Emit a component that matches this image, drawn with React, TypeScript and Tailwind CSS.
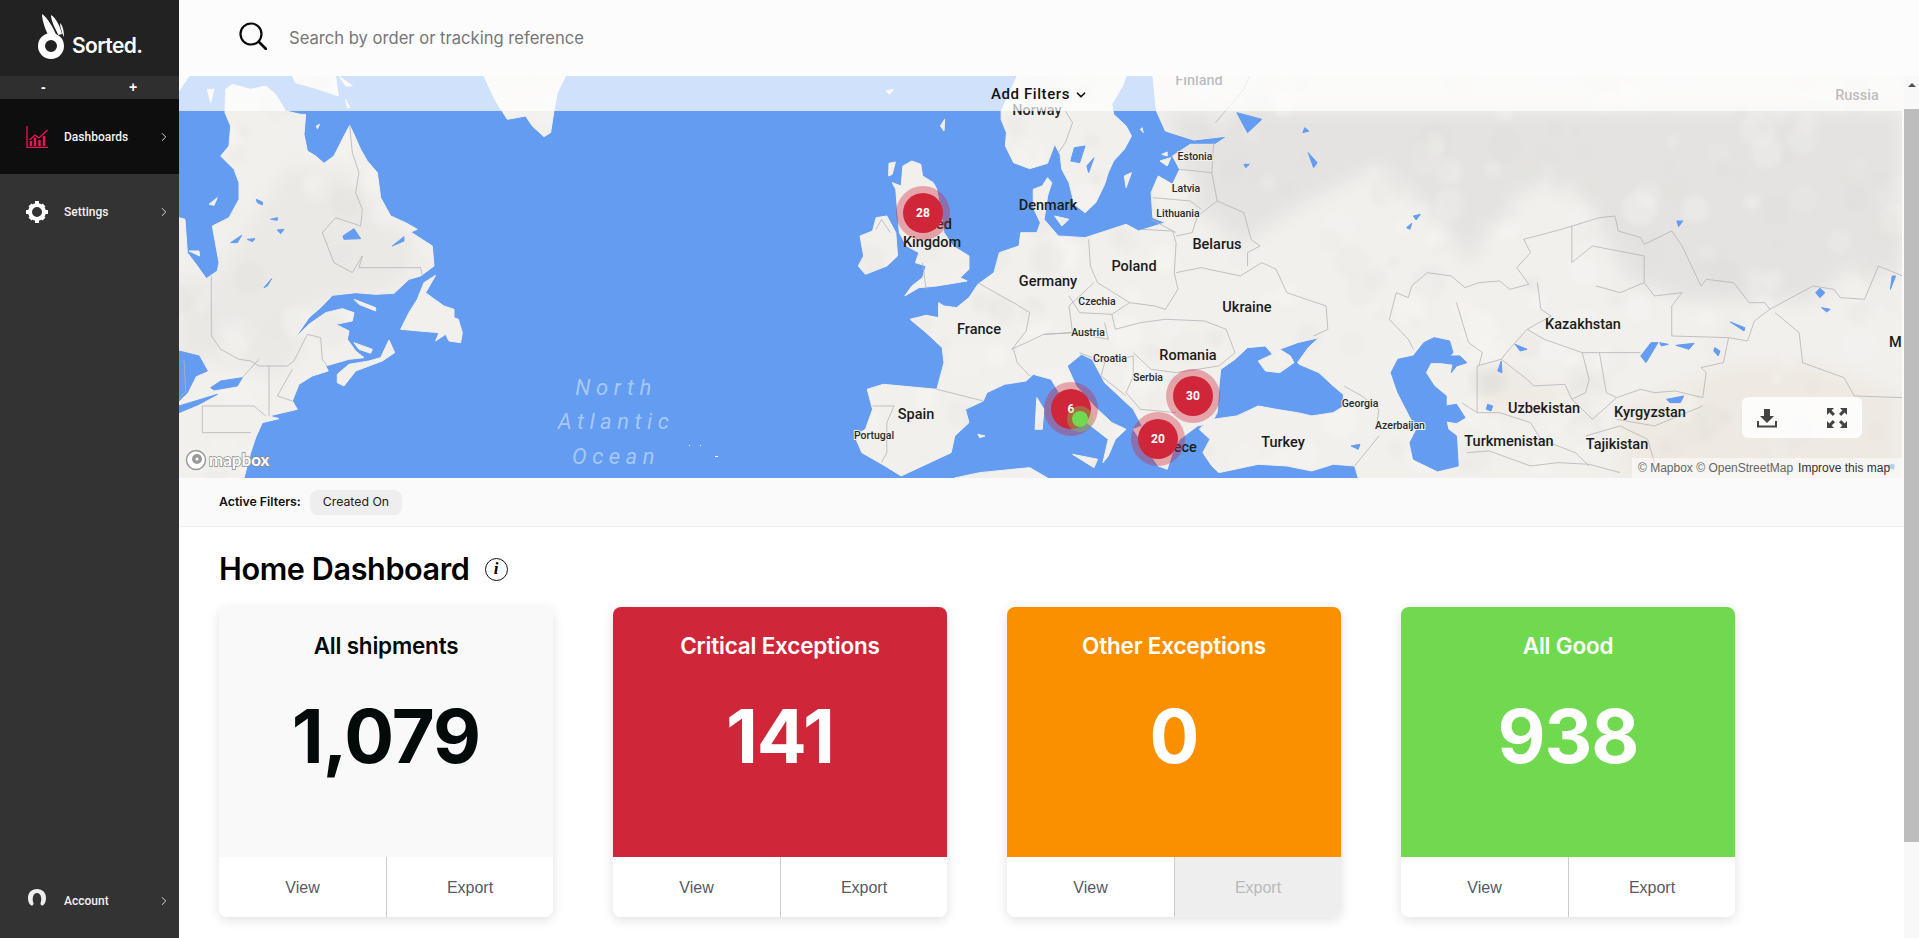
import type { ReactNode } from "react";
import { ChevronRight, ChevronDown } from "lucide-react";

const LAND = "#f2f0ed";
const WATER = "#639cf0";
const BORDER = "#b4b4b8";

// coastlines traced per map section, each section has its own scale
const WEST = "scale(0.3333 0.3333)";
const MID = "translate(640 0) scale(0.3571 0.3333)";
const EAST = "translate(1200 0) scale(0.3444 0.3333)";

const westLand = [
  "140,40 160,25 215,40 260,30 290,55 320,105 365,115 380,115 375,175 385,225 410,240 435,262 465,240 490,190 512,148 525,175 545,220 565,255 595,290 605,365 635,420 680,440 715,460 695,468 760,510 765,570 725,600 690,610 645,652 590,655 530,650 460,658 430,690 390,725 345,790 390,745 440,710 490,698 525,710 520,735 470,745 510,765 505,790 530,825 555,845 510,850 440,870 448,885 400,900 360,925 340,975 355,1000 270,1020 300,1028 250,1040 230,1085 215,1130 195,1206 0,1206 0,425 18,430 25,530 55,570 82,608 115,585 120,560 100,450 150,425 180,370 180,320 165,280 125,240 150,210 155,150 138,110",
  "475,895 510,865 570,855 605,845 630,792 647,830 610,855 530,885 495,930 475,920",
  "665,760 690,710 715,670 735,620 770,598 740,650 760,665 795,690 825,700 825,725 838,730 850,770 845,800 810,795 800,775 770,795 780,770 720,765",
  "525,670 590,695 590,705 540,685",
  "525,800 580,820 575,832 540,820",
  "915,0 1160,0 1135,50 1125,105 1115,170 1095,182 1060,150 1040,120 985,130 950,75",
  "340,0 470,0 478,60 420,40 350,20",
  "0,0 30,0 0,45",
  "85,40 105,40 95,80",
  "480,0 520,30 500,30",
  "500,70 512,95 505,95",
  "90,385 115,365 105,388",
  "30,525 60,525 62,540",
  "412,150 422,145 415,158",
];
const westLakes = [
  "0,825 60,840 85,885 50,900 25,950 0,975",
  "95,935 125,915 190,905 175,930 105,942",
  "0,990 115,955 60,985 0,1010",
  "232,370 250,378 250,387 235,380",
  "275,430 295,425 295,433",
  "155,500 188,478 175,500",
  "205,490 228,488 220,497",
  "295,462 315,460 305,473",
  "492,480 525,458 545,488 495,490",
  "640,510 675,482 675,495",
  "255,635 278,608 265,630",
];
const westBorders = [
  "97,600 97,780 125,820 180,850 215,855 240,870 325,870 345,855 385,775 425,785 430,850 445,870",
  "240,850 190,905",
  "512,148 520,230 540,290 530,350 550,400 545,450 470,425 430,470 465,560 520,590 550,540 540,575 725,575 730,600",
  "270,870 270,1020",
  "340,880 295,960 340,975",
  "70,990 225,990 260,1020",
  "70,990 70,1070 215,1070",
  "0,970 20,945 15,850",
];

const midLand = [
  // Europe and Asia in one piece
  "135,940 180,925 330,940 350,860 345,815 300,770 255,730 300,718 335,725 335,680 350,690 385,695 420,665 445,625 490,590 505,530 560,510 565,470 610,470 620,440 600,395 600,340 625,330 640,305 652,320 640,360 635,400 630,430 670,480 745,485 860,445 895,465 970,440 935,425 930,350 950,300 990,325 1010,280 990,240 1040,205 1110,205 1145,180 1050,192 970,165 945,105 935,0 3100,0 3100,1206 1510,1206 1500,1170 1440,1165 1380,1185 1310,1170 1230,1165 1120,1190 1100,1170 1075,1130 1095,1090 1065,1060 1090,1032 1170,1020 1230,990 1280,1000 1340,1010 1380,1020 1440,1010 1470,990 1468,955 1440,930 1400,890 1345,865 1340,860 1370,815 1400,785 1340,800 1290,820 1320,840 1330,860 1290,890 1250,885 1230,855 1270,835 1250,810 1200,815 1165,850 1125,880 1120,930 1115,1010 1100,1040 1060,1050 1010,1090 990,1130 975,1180 950,1170 905,1100 880,1060 905,1050 880,1000 860,980 800,920 765,850 735,835 695,870 720,930 770,990 820,1040 860,1060 830,1090 810,1140 795,1160 810,1090 750,1040 700,1000 650,910 600,895 580,915 520,925 470,950 460,975 410,1000 420,1040 380,1080 370,1130 290,1170 230,1200 185,1170 120,1130 100,1080 130,1060 150,1000",
  // Scandinavia
  "555,0 860,0 850,30 820,85 825,115 860,150 875,180 855,220 825,255 810,290 800,325 775,380 745,410 715,385 700,320 680,280 675,235 660,205 640,262 590,278 545,260 522,210 525,170 510,130 510,105",
  // Britain and Ireland
  "235,270 260,255 285,265 290,300 320,320 330,340 350,470 375,510 420,540 420,580 395,605 415,615 330,630 280,635 240,660 260,630 290,605 300,570 270,560 280,530 245,510 225,470 215,340 205,320 230,330",
  "160,425 190,420 215,470 220,540 190,570 130,595 110,570 125,540 115,480 150,465",
  // islands
  "196,262 214,258 205,295 195,300",
  "340,150 352,130 350,165",
  "188,45 208,40 198,55",
  "710,1135 780,1150 770,1175",
  "610,965 630,1000 625,1060 605,1060",
  "445,1075 465,1080 450,1085",
  "380,1206 450,1190 590,1175 640,1206",
  "855,300 875,290 860,335",
  "955,255 985,245 975,270",
  "960,235 975,228 975,240",
  "900,160 905,155 908,170",
  "660,420 700,430 680,450",
];
const midWater = [
  "715,215 745,210 730,260 705,255",
  "750,270 770,245 755,290",
  "1170,110 1240,130 1200,170",
  "1370,230 1395,260 1385,275",
  "1360,155 1372,165 1355,170",
  "1190,265 1205,265 1195,275",
  "1490,1110 1515,1105 1510,1120",
];
const midBorders = [
  "690,105 710,140 690,200 670,230",
  "1110,140 1190,40 1205,0",
  "1105,200 1100,290 1115,375 1060,420 1045,470 1000,480",
  "1010,280 1100,290",
  "935,365 1040,375 1070,400",
  "930,430 1000,470",
  "755,490 760,570 780,620 870,680 940,690 970,700 1005,640 995,590 1000,500 990,465 900,460",
  "1000,590 1070,575 1180,600 1240,560 1280,580 1310,650 1420,690 1425,760 1385,780",
  "1115,375 1190,410 1210,490 1235,510 1200,530 1200,570",
  "445,620 510,660 545,680 590,710 580,765 540,820 630,775 710,770 700,690 770,620",
  "700,660 730,710 820,715 870,680",
  "630,775 710,770 810,790 800,740",
  "330,940 460,975",
  "150,990 210,990 190,1040 190,1130 175,1160",
  "545,820 555,860 590,900",
  "820,715 830,760 900,740 970,730",
  "970,730 1080,735 1140,760 1165,830 1120,870 1000,890 930,880 880,830",
  "730,830 800,860 880,840 880,900 860,950 900,1000 1000,1010",
  "800,860 790,900 860,960",
  "1470,930 1520,960 1568,1000 1560,1060",
  "300,640 290,560",
  "160,460 175,430 200,470",
  "1500,1170 1568,1080",
];

const eastWater = [
  "130,800 160,785 205,795 215,830 205,840 235,840 255,860 225,870 210,890 215,865 180,860 150,860 135,890 160,930 195,960 195,990 225,985 250,1025 225,1040 195,1035 200,1060 225,1080 230,1170 170,1185 100,1150 90,1100 110,1060 80,1000 55,950 35,890 55,850 100,840",
  "345,885 355,855 357,890",
  "315,985 330,990 325,1005 312,1000",
  "395,805 430,820 410,825",
  "760,840 790,800 810,800 775,860",
  "815,800 840,805 820,810",
  "862,808 915,802 900,820",
  "1020,738 1062,755 1060,765",
  "975,815 990,825 985,840 972,825",
  "835,970 885,960 875,980 845,980",
  "100,420 120,415 108,432",
  "80,455 95,442 90,460",
  "865,435 882,435 870,452",
  "1268,650 1280,637 1295,650 1280,665",
  "1285,695 1310,700 1300,708",
  "1485,640 1490,600 1500,600",
  "1470,1170 1495,1165 1495,1180",
];
const eastBorders = [
  "30,730 50,650 85,665 95,630 140,590 210,600 250,635 290,620 350,615 380,640 435,625 400,575 440,530 420,490 530,460 640,425 685,420 695,465 760,485 770,505 850,465 880,510 935,630 950,610 1030,620 1075,680 1120,680 1135,700 1260,630 1320,640 1340,665 1410,670 1450,570 1520,600",
  "30,730 85,790 100,820",
  "285,870 355,850 430,910 450,930 540,925 560,970 620,1030 690,965 760,940 800,950 860,945 940,965 950,890 935,875 1000,860 1015,785 1070,795 1090,735 1135,700",
  "1150,710 1220,770 1230,860 1350,905 1380,960 1520,965",
  "285,870 285,1010",
  "240,980 285,1010 350,1010 440,1040 470,1090 570,1130 610,1170",
  "690,1030 800,1050 940,990",
  "600,1080 700,1050 780,1090 800,1160",
  "255,1130 320,1125 440,1170 520,1160 610,1165 700,1190",
  "225,680 260,800 300,830 290,870",
  "590,830 760,830",
  "590,830 610,910 600,950 560,970",
  "640,830 660,950 690,965",
  "430,760 480,790 590,830",
  "560,450 560,560 620,510 770,540 770,620 700,650 630,630",
  "770,620 800,660 880,650 850,690 850,780 1015,785",
  "460,620 470,700 500,720 430,760 370,830 355,850",
];
// broad terrain tones, in plain map coordinates
const terrain: [string, string][] = [
  ["985,35 1723,35 1723,200 1670,190 1640,225 1510,225 1450,205 1400,115 1350,110 1310,150 1290,190 1280,170 1230,115 1200,90 1120,130 1060,170 1020,130", "#e4e3e1"],
  ["1440,335 1545,290 1625,285 1723,320 1723,402 1440,402", "#eee9e2"],
  ["1298,290 1322,283 1350,310 1385,310 1390,335 1300,338", "#efeae3"],
  ["0,200 40,210 120,280 100,300 30,280 0,300", "#e9e8e5"],
  ["35,200 110,90 170,100 240,180 215,215 130,230 120,280 60,290", "#eae9e6"],
];

const majorLabels: [string, number, number][] = [
  ["Norway", 1037, 110],
  ["United", 931, 224],
  ["Kingdom", 932, 242],
  ["Denmark", 1048, 205],
  ["Germany", 1048, 281],
  ["Poland", 1134, 266],
  ["Belarus", 1217, 244],
  ["Ukraine", 1247, 307],
  ["France", 979, 329],
  ["Spain", 916, 414],
  ["Turkey", 1283, 442],
  ["Romania", 1188, 355],
  ["Greece", 1174, 447],
  ["Finland", 1199, 80],
  ["Russia", 1857, 95],
  ["Kazakhstan", 1583, 324],
  ["Uzbekistan", 1544, 408],
  ["Kyrgyzstan", 1650, 412],
  ["Turkmenistan", 1509, 441],
  ["Tajikistan", 1617, 444],
];
const minorLabels: [string, number, number][] = [
  ["Estonia", 1195, 156],
  ["Latvia", 1186, 188],
  ["Lithuania", 1178, 213],
  ["Czechia", 1097, 301],
  ["Austria", 1088, 332],
  ["Croatia", 1110, 358],
  ["Serbia", 1148, 377],
  ["Portugal", 874, 435],
  ["Georgia", 1360, 403],
  ["Azerbaijan", 1400, 425],
];
const pins: [string, number, number][] = [
  ["28", 923, 213],
  ["30", 1193, 396],
  ["6", 1071, 409],
  ["20", 1158, 439],
];

// soft mottling on the land, same every run
const hash = (n: number) => {
  const v = Math.sin(n * 12.9898) * 43758.5453;
  return v - Math.floor(v);
};
const blobs = Array.from({ length: 500 }, (_, i) => ({
  x: hash(i + 1) * 1723,
  y: hash(i + 1001) * 402,
  r: 5 + hash(i + 2001) * 13,
  fill: i % 2 === 0 ? "#fbfaf8" : "#dedcd8",
  opacity: 0.1 + hash(i + 3001) * 0.16,
}));

function Polys({ items, fill }: { items: string[]; fill: string }) {
  return (
    <>
      {items.map((p, i) => (
        <polygon key={i} points={p} fill={fill} stroke={fill} strokeWidth="1" strokeLinejoin="round" vectorEffect="non-scaling-stroke" />
      ))}
    </>
  );
}

function Lines({ items }: { items: string[] }) {
  return (
    <>
      {items.map((p, i) => (
        <polyline key={i} points={p} fill="none" stroke={BORDER} strokeWidth="0.8" vectorEffect="non-scaling-stroke" />
      ))}
    </>
  );
}

function MapDrawing() {
  return (
    <svg viewBox="0 0 1723 402" className="block h-[402px] w-full">
      <defs>
        <clipPath id="land-clip">
          {westLand.map((p, i) => (
            <polygon key={`w${i}`} points={p} transform={WEST} />
          ))}
          {midLand.map((p, i) => (
            <polygon key={`m${i}`} points={p} transform={MID} />
          ))}
        </clipPath>
        <filter id="soft-wide" x="-10%" y="-10%" width="120%" height="120%">
          <feGaussianBlur stdDeviation="9" />
        </filter>
        <filter id="soft" x="0" y="0" width="100%" height="100%">
          <feGaussianBlur stdDeviation="2.5" />
        </filter>
      </defs>
      <rect width="1723" height="402" fill={WATER} />
      <g transform={WEST}>
        <Polys items={westLand} fill={LAND} />
      </g>
      <g transform={MID}>
        <Polys items={midLand} fill={LAND} />
      </g>
      <g clipPath="url(#land-clip)">
        <g filter="url(#soft-wide)">
          {terrain.map(([p, fill], i) => (
            <polygon key={i} points={p} fill={fill} />
          ))}
        </g>
        <g filter="url(#soft)">
          {blobs.map((b, i) => (
            <circle key={i} cx={b.x} cy={b.y} r={b.r} fill={b.fill} fillOpacity={b.opacity} />
          ))}
        </g>
      </g>
      <g transform={WEST}>
        <Polys items={westLakes} fill={WATER} />
        <Lines items={westBorders} />
      </g>
      <g transform={MID}>
        <Polys items={midWater} fill={WATER} />
        <Lines items={midBorders} />
      </g>
      <g transform={EAST}>
        <Polys items={eastWater} fill={WATER} />
        <Lines items={eastBorders} />
      </g>
      <g className="font-['Roboto',sans-serif] font-medium" fill="#1c1c1c" textAnchor="middle">
        {majorLabels.map(([name, x, y]) => (
          <text key={name} x={x - 179} y={y - 76 + 5} fontSize="14.500">
            {name}
          </text>
        ))}
        {minorLabels.map(([name, x, y]) => (
          <text key={name} x={x - 179} y={y - 76 + 4} fontSize="10.5" fill="#2a2a2a" stroke="#f2f0ed" strokeWidth="2" paintOrder="stroke">
            {name}
          </text>
        ))}
        <text x="1710" y="271" fontSize="14.500" textAnchor="start">
          Mo
        </text>
      </g>
      <g className="font-['Roboto',sans-serif] italic" fill="#a6c8f5" fontSize="22" letterSpacing="5.5" textAnchor="middle">
        <text x="437" y="319">North</text>
        <text x="437" y="353">Atlantic</text>
        <text x="437" y="388">Ocean</text>
      </g>
      <g fill="#fff">
        <rect x="510" y="369" width="1" height="1" />
        <rect x="521" y="369" width="1" height="1" />
        <rect x="536" y="380" width="3" height="1" />
      </g>
      {pins.map(([label, x, y]) => (
        <g key={label}>
          <circle cx={x - 179} cy={y - 76} r="27" fill="#cf2739" fillOpacity="0.37" />
          <circle cx={x - 179} cy={y - 76} r="20" fill="#cf2739" />
          <text x={x - 179} y={y - 72} fontSize="12" fontWeight="700" fill="#fff" textAnchor="middle" className="font-['Roboto',sans-serif]">
            {label}
          </text>
        </g>
      ))}
      <circle cx="901" cy="343" r="13" fill="#70d94f" fillOpacity="0.35" />
      <circle cx="901" cy="343" r="8" fill="#70d94f" />
      <g>
        <circle cx="17" cy="384" r="9.5" fill="#fff" stroke="#9a9a9a" strokeWidth="1.5" />
        <circle cx="18" cy="383" r="5" fill="#9a9a9a" />
        <circle cx="18" cy="383" r="1.5" fill="#fff" />
        <text x="30" y="390" fontSize="17" fontWeight="700" fill="#fff" stroke="#8c8c8c" strokeWidth="1.5" paintOrder="stroke" className="font-['Lato',sans-serif]">
          mapbox
        </text>
      </g>
    </svg>
  );
}

function SortedLogo() {
  return (
    <div className="flex items-end">
      <svg width="32" height="48" viewBox="0 0 32 48" className="mr-[2px]">
        <path d="M4 1 C9 4 15 14 19 24 L11 24 C8 18 4 8 4 1Z" fill="#fff" />
        <path d="M13 2 C18 5 22 13 24 21 L20.500 22 C17 15 13 8 13 2Z" fill="#fff" />
        <path d="M22 10 C25 13 26 18 26 24 L24.500 21 C23.500 17 22 14 22 10Z" fill="#fff" />
        <circle cx="13" cy="33" r="9.5" fill="none" stroke="#fff" strokeWidth="7" />
      </svg>
      <span className="font-['Inter',sans-serif] text-[21px] leading-[30px] font-semibold tracking-[-0.6px] text-white">
        Sorted.
      </span>
    </div>
  );
}

function NavItem({ label, active, icon }: { label: string; active?: boolean; icon: ReactNode }) {
  return (
    <div className={`flex h-[75px] items-center pr-[8px] pl-[26px] ${active ? "bg-[#0e0e0e]" : "bg-[#333333]"}`}>
      <div className="flex w-[38px] shrink-0">{icon}</div>
      <span className="flex-1 font-['Roboto',sans-serif] text-[12px] font-medium text-[#f2f2f2]">{label}</span>
      <ChevronRight size={14} strokeWidth={1.5} className="text-[#eeeeee]" />
    </div>
  );
}

function Sidebar() {
  return (
    <aside className="flex w-[179px] shrink-0 flex-col bg-[#333333]">
      <div className="h-[76px] bg-[#222222] pt-[13px] pl-[38px]">
        <SortedLogo />
      </div>
      <div className="flex h-[23px] items-center bg-[#2f2f2f] font-['Liberation_Sans',sans-serif] text-[14px] font-bold text-white">
        <span className="ml-[41px] w-[88px]">-</span>
        <span>+</span>
      </div>
      <NavItem
        active
        label="Dashboards"
        icon={
          <svg width="22" height="22" viewBox="0 0 22 22" fill="none" stroke="#ee1257" strokeWidth="1.3">
            <path d="M1 0V21.5H22" />
            <path d="M3.500 14 L9 9 L13 12 L21.500 4" />
            <path d="M5 20V15M9 20V11.500M13.500 20V14M18 20V10" strokeWidth="2.4" />
          </svg>
        }
      />
      <NavItem
        label="Settings"
        icon={
          <svg width="22" height="22" viewBox="0 0 22 22">
            <circle cx="11" cy="11" r="7" fill="none" stroke="#fff" strokeWidth="4" />
            <path
              d="M9 0h4v4H9zM9 18h4v4H9zM0 9h4v4H0zM18 9h4v4h-4zM2.500 5.400l2.900-2.900 2.800 2.800-2.900 2.900zM13.800 16.700l2.900-2.900 2.800 2.800-2.900 2.900zM2.500 16.600l2.800-2.800 2.900 2.900-2.800 2.800zM13.800 5.300l2.800-2.800 2.900 2.900-2.800 2.800z"
              fill="#fff"
            />
          </svg>
        }
      />
      <div className="mt-auto">
        <NavItem
          label="Account"
          icon={
            <svg width="20" height="18" viewBox="0 0 20 18" className="mt-[-5px] ml-[1px]">
              <path
                d="M10 0C15.500 0 19 3.500 19 9 C19 12 18 15.500 15.500 16.500 C14 17 13.500 15.500 13.500 14 C15 11 14.500 4 10 4 C5.500 4 5 11 6.500 14 C6.500 15.500 6 17 4.500 16.500 C2 15.500 1 12 1 9 C1 3.500 4.500 0 10 0Z"
                fill="#eeeeee"
              />
            </svg>
          }
        />
      </div>
    </aside>
  );
}

function SearchBar() {
  return (
    <header className="flex h-[76px] shrink-0 items-center bg-[#fcfcfc] pl-[60px]">
      <svg width="28" height="28" viewBox="0 0 28 28" fill="none" stroke="#0a0a0a" strokeWidth="2.2" strokeLinecap="round" className="mt-[-4px]">
        <circle cx="12" cy="12" r="10.500" />
        <path d="M20 20 L27 27" strokeWidth="2.6" />
      </svg>
      <span className="ml-[22px] pt-[1px] font-['Inter',sans-serif] text-[16.6px] text-[#777777]">Search by order or tracking reference</span>
    </header>
  );
}

function MapPanel() {
  return (
    <div className="relative h-[402px] w-[1723px] shrink-0 overflow-hidden">
      <MapDrawing />
      <div className="absolute inset-x-0 top-0 flex h-[35px] items-center justify-center bg-white/70 pt-[2px] font-['Roboto',sans-serif] text-[15px] font-medium tracking-[0.6px] text-[#111111]">
        <span className="mr-[4px] ml-[-2px]">Add Filters</span>
        <ChevronDown size={14} strokeWidth={3} />
      </div>
      <div className="absolute top-[321px] left-[1563px] flex h-[41px] w-[120px] items-center justify-between rounded-[6px] bg-white/85 px-[15px]">
        <svg width="20" height="20" viewBox="0 0 20 20" fill="#444444">
          <path d="M7 1h6v7h4l-7 7-7-7h4z" />
          <path d="M0 13h2v4.500h16V13h2v6.500H0z" />
        </svg>
        <svg width="20" height="20" viewBox="0 0 20 20" fill="#444444">
          <path d="M0 0h7L4.600 2.400 8 5.800 5.800 8 2.400 4.600 0 7zM20 0v7l-2.400-2.400L14.200 8 12 5.800l3.400-3.400L13 0zM0 20v-7l2.400 2.400L5.800 12 8 14.200l-3.400 3.400L7 20zM20 20h-7l2.400-2.400L12 14.200 14.200 12l3.400 3.400L20 13z" />
        </svg>
      </div>
      <div className="absolute right-0 bottom-0 flex h-[20px] w-[270px] items-center gap-[5px] bg-white/50 pl-[6px] font-['Liberation_Sans',sans-serif] text-[12px] whitespace-nowrap text-[#666666]">
        <span>© Mapbox © OpenStreetMap</span>
        <span className="text-[#333333]">Improve this map</span>
      </div>
    </div>
  );
}

function StatCard({
  title,
  value,
  bg,
  dark,
  exportDisabled,
}: {
  title: string;
  value: string;
  bg: string;
  dark?: boolean;
  exportDisabled?: boolean;
}) {
  return (
    <div className="flex h-[310px] w-[334px] flex-col overflow-hidden rounded-[8px] shadow-[0_3px_12px_rgba(0,0,0,0.12)]">
      <div className={`flex flex-1 flex-col items-center font-['Inter',sans-serif] ${bg} ${dark ? "text-[#020a0a]" : "text-white"}`}>
        <div className="mt-[23px] text-[22.5px] leading-[32px] font-semibold tracking-[-0.2px]">{title}</div>
        <div className="mt-[29px] text-[74px] leading-[90px] font-bold tracking-[-1px]">{value}</div>
      </div>
      <div className="flex h-[60px] shrink-0 bg-white pt-[2px] font-['Liberation_Sans',sans-serif] text-[16px] text-[#555a66]">
        <div className="flex w-[167px] items-center justify-center">View</div>
        <div
          className={`mt-[-2px] flex flex-1 items-center justify-center border-l border-[#cccccc] pt-[2px] ${exportDisabled ? "bg-[#eeeeee] text-[#b9b9b9]" : ""}`}
        >
          Export
        </div>
      </div>
    </div>
  );
}

function Scrollbar() {
  return (
    <div className="flex w-[15px] shrink-0 flex-col items-center bg-[#f8f8f8]">
      <div className="flex h-[33px] w-full shrink-0 items-start justify-center pt-[7px]">
        <div className="h-0 w-0 border-x-[4px] border-b-[4px] border-x-transparent border-b-[#505050]" />
      </div>
      <div className="h-[733px] w-full shrink-0 bg-[#bdbdbd]" />
    </div>
  );
}

export default function App() {
  return (
    <div className="flex h-[938px] w-full overflow-hidden bg-white">
      <Sidebar />
      <main className="flex min-w-0 flex-1 flex-col">
        <SearchBar />
        <div className="flex min-h-0 flex-1">
          <div className="min-w-0 flex-1">
            <div className="bg-[#fafafa]">
              <MapPanel />
            </div>
            <div className="flex h-[49px] items-center border-b border-[#eeeeee] bg-[#fafafa] pl-[40px] font-['Inter',sans-serif] text-[12.3px]">
              <span className="font-semibold text-[#111111]">Active Filters:</span>
              <span className="ml-[9px] flex h-[25px] items-center rounded-[8px] bg-[#eeeeee] px-[13px] text-[#222222]">Created On</span>
            </div>
            <div className="flex items-center pt-[24px] pl-[40px]">
              <h1 className="font-['Inter',sans-serif] text-[30.6px] leading-[36px] font-semibold tracking-[-0.4px] text-black">Home Dashboard</h1>
              <span className="ml-[15px] flex h-[23px] w-[23px] items-center justify-center rounded-full border border-[#111111] font-['Liberation_Serif',serif] text-[17px] font-bold text-black italic">
                i
              </span>
            </div>
            <div className="mt-[20px] flex gap-[60px] pl-[40px]">
              <StatCard title="All shipments" value="1,079" bg="bg-[#f9f9f9]" dark />
              <StatCard title="Critical Exceptions" value="141" bg="bg-[#cf2739]" />
              <StatCard title="Other Exceptions" value="0" bg="bg-[#fa9000]" exportDisabled />
              <StatCard title="All Good" value="938" bg="bg-[#70d94f]" />
            </div>
          </div>
          <Scrollbar />
        </div>
      </main>
    </div>
  );
}
